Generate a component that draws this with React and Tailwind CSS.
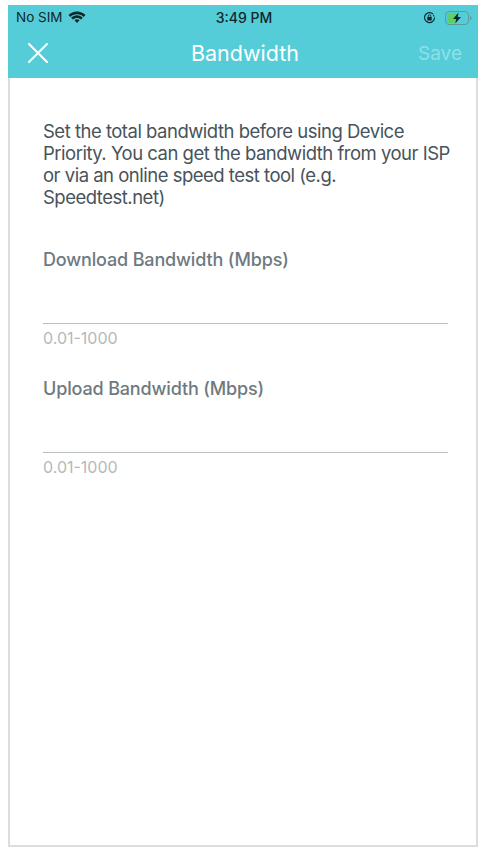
export default function App() {
  return (
    <div className="w-[485px] h-[848px] bg-white pt-[5px] pl-[8px] pr-[7px] pb-[1px] font-['Inter','Liberation_Sans',sans-serif]">
      <div className="w-full h-[842px] bg-white border-l-2 border-r-2 border-b-2 border-[#dcdede] flex flex-col">
        <div className="h-[73px] bg-[#55cdd9] flex flex-col shrink-0 -mx-[2px]">
          <div className="h-[25px] flex items-center justify-between pl-[8px] pr-[6px] text-[13.500px] text-[#10272b]">
            <div className="flex items-center gap-[5px] w-[90px]">
              <span>No SIM</span>
              <svg width="18" height="13" viewBox="0 0 18 13" fill="#10272b">
                <path d="M9 3.200c2.600 0 5 1 6.700 2.700L17.500 4C15.200 1.700 12.300.4 9 .4S2.800 1.700.5 4l1.800 1.900C4 4.200 6.400 3.200 9 3.200z" />
                <path d="M9 7c1.600 0 3 .6 4.100 1.600l1.800-1.900C13.300 5.200 11.300 4.300 9 4.300S4.700 5.200 3.100 6.700l1.800 1.900C6 7.600 7.400 7 9 7z" />
                <path d="M9 8.200c-1 0-1.800.4-2.500 1L9 12l2.500-2.800c-.7-.6-1.500-1-2.500-1z" />
              </svg>
            </div>
            <span className="font-medium text-[14px]">3:49 PM</span>
            <div className="flex items-center gap-[9px] w-[90px] justify-end">
              <svg width="13" height="13" viewBox="0 0 13 13" fill="none">
                <path d="M11.500 6.500a5 5 0 1 1-1.500-3.500" stroke="#10272b" strokeWidth="1.200" />
                <path d="M11.800 5.500l-1.800-.2.300-2z" fill="#10272b" />
                <rect x="4.300" y="6" width="4.400" height="3.400" rx=".5" fill="#10272b" />
                <path d="M5.200 6V5a1.300 1.300 0 0 1 2.600 0v1" stroke="#10272b" strokeWidth=".9" />
              </svg>
              <svg width="27" height="14" viewBox="0 0 27 14" fill="none">
                <rect x=".5" y=".5" width="23" height="13" rx="3.500" stroke="#5a9aa2" />
                <rect x="2" y="2" width="11" height="10" rx="2" fill="#5fd068" />
                <path d="M25 5c1 .4 1.500 1.100 1.500 2s-.5 1.600-1.500 2z" fill="#5a9aa2" />
                <path d="M13.500 1.500L8 8h3.200l-1 4.500L16 6h-3.200z" fill="#10272b" />
              </svg>
            </div>
          </div>
          <div className="flex-1 grid grid-cols-3 items-center pl-[20px] pr-[16px] pb-[2px]">
            <svg width="20" height="20" viewBox="0 0 20 20" stroke="white" strokeWidth="2" strokeLinecap="round">
              <path d="M1 1l18 18M19 1L1 19" />
            </svg>
            <span className="text-[21.500px] text-white text-center whitespace-nowrap">Bandwidth</span>
            <span className="text-[19px] leading-[30px] pt-[1px] text-[#8ee0e7] text-right">Save</span>
          </div>
        </div>
        <div className="pl-[33px] pr-[28px] pt-[42px] flex flex-col">
          <p className="text-[18.500px] leading-[22px] text-[#48535a] tracking-[-0.5px] -mr-[4px]">
            Set the total bandwidth before using Device Priority. You can get the bandwidth from your ISP or via an online speed test tool (e.g. Speedtest.net)
          </p>
          <Field label="Download Bandwidth (Mbps)" top="mt-[40px]" />
          <Field label="Upload Bandwidth (Mbps)" top="mt-[29px]" />
        </div>
      </div>
    </div>
  );
}

function Field({ label, top }) {
  return (
    <div className={top}>
      <div className="text-[18px] leading-[24px] tracking-[-0.15px] font-[450] text-[#6e7a80]">{label}</div>
      <div className="h-[52px] border-b border-[#b9bfc2]" />
      <div className="mt-[4px] text-[16px] leading-[20px] text-[#b4b9bb]">0.01-1000</div>
    </div>
  );
}
